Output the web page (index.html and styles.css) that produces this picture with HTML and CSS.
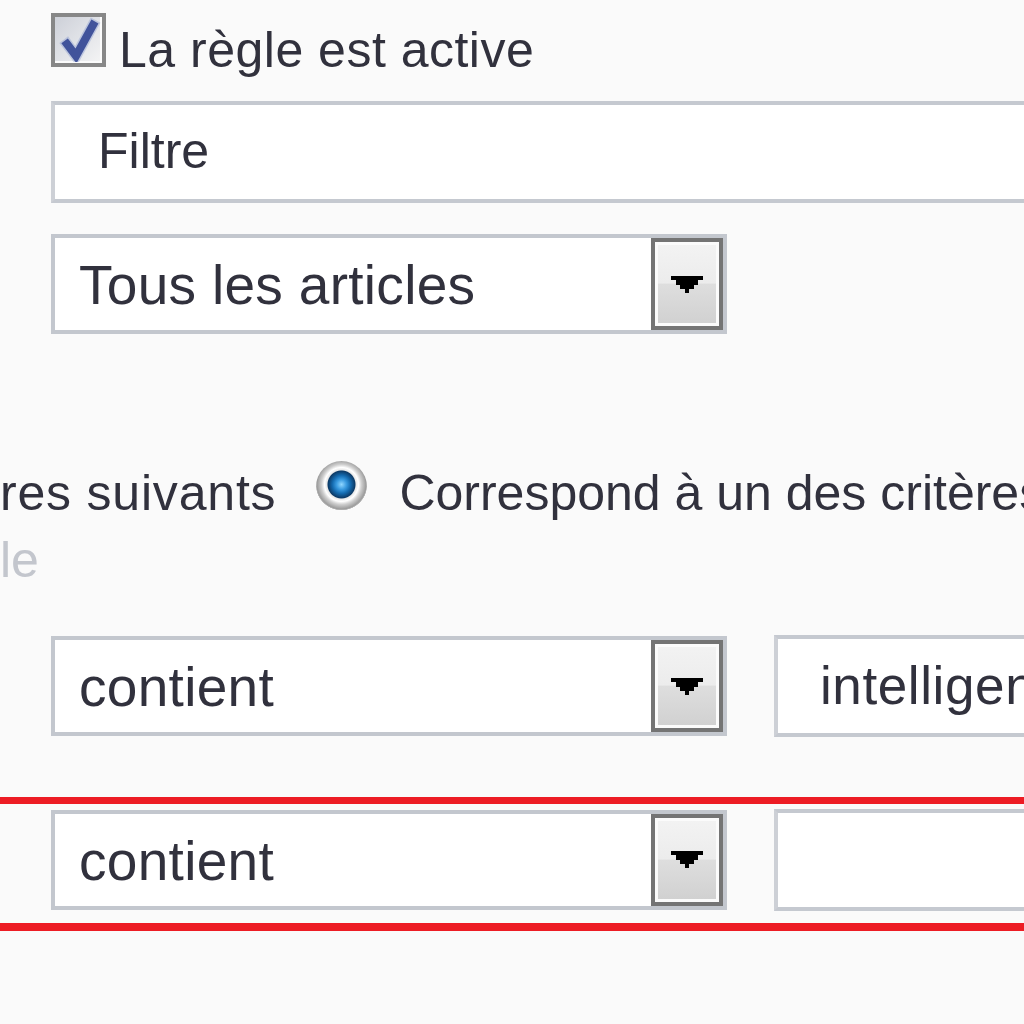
FILE: index.html
```html
<!DOCTYPE html>
<html lang="fr">
<head>
<meta charset="utf-8">
<title>Règle de filtre</title>
<link rel="stylesheet" href="styles.css">
</head>
<body>
<form class="rule-form">
  <label class="check-row">
    <span class="checkbox"><svg viewBox="0 0 46 45" width="46" height="45"><polyline points="12,27 21,39 38,8" fill="none" stroke="#8fa0d0" stroke-width="11" stroke-linejoin="miter" stroke-linecap="square" opacity="0.45"/><polyline points="12,27 21,39 38,8" fill="none" stroke="#41539b" stroke-width="8" stroke-linejoin="miter" stroke-linecap="square"/></svg></span><span class="check-label">La règle est active</span>
  </label>

  <div class="field-row">
    <div class="text-input wide">Filtre</div>
  </div>

  <div class="field-row">
    <div class="select"><span class="select-value">Tous les articles</span><span class="select-btn"><svg class="arrow" viewBox="0 0 7 4" preserveAspectRatio="none"><polygon points="0,0 7,0 7,1 6,1 6,2 5,2 5,3 4,3 4,4 3,4 3,3 2,3 2,2 1,2 1,1 0,1" fill="#000"/></svg></span></div>
  </div>

  <div class="match-row"><span class="match-tail">res suivants</span><span class="radio"></span><span class="match-any">Correspond à un des critères suivants</span></div>
  <div class="hint">le</div>

  <div class="cond-row">
    <div class="select"><span class="select-value">contient</span><span class="select-btn"><svg class="arrow" viewBox="0 0 7 4" preserveAspectRatio="none"><polygon points="0,0 7,0 7,1 6,1 6,2 5,2 5,3 4,3 4,4 3,4 3,3 2,3 2,2 1,2 1,1 0,1" fill="#000"/></svg></span></div>
    <div class="text-input cond-input">intelligence</div>
  </div>

  <div class="cond-row flagged">
    <div class="select"><span class="select-value">contient</span><span class="select-btn"><svg class="arrow" viewBox="0 0 7 4" preserveAspectRatio="none"><polygon points="0,0 7,0 7,1 6,1 6,2 5,2 5,3 4,3 4,4 3,4 3,3 2,3 2,2 1,2 1,1 0,1" fill="#000"/></svg></span></div>
    <div class="text-input cond-input"></div>
  </div>
</form>
</body>
</html>
```

FILE: styles.css
```css
html, body {
  margin: 0;
  padding: 0;
}

body {
  width: 1024px;
  height: 1024px;
  overflow: hidden;
  background: #fafafa;
  font-family: "Liberation Sans", Arial, sans-serif;
  font-size: 50px;
  color: #31313d;
}

.rule-form {
  padding-top: 13px;
  white-space: nowrap;
}

/* checkbox row */
.check-row {
  display: block;
  padding-left: 51px;
  font-size: 50px;
  line-height: 54px;
}

.check-label {
  letter-spacing: 0.5px;
}

.checkbox {
  display: inline-block;
  box-sizing: border-box;
  width: 55px;
  height: 54px;
  border: 4.5px solid #878787;
  background: linear-gradient(135deg, #cdd0d8 0%, #dfe1e6 45%, #f5f5f5 100%);
  box-shadow: inset -2px -2px 0 #fbfbfb;
  margin-right: 13px;
}

.checkbox svg {
  display: block;
}

.field-row {
  padding-left: 51px;
}

.check-row + .field-row {
  margin-top: 24px;
}

.field-row + .field-row {
  margin-top: 31px;
}

/* text input */
.text-input {
  box-sizing: border-box;
  height: 102px;
  border: 4.5px solid #c5c9d0;
  border-left-color: #cdd0d6;
  background: #fff;
  padding-left: 43px;
  font-size: 50px;
  line-height: 93px;
  color: #31313d;
  overflow: hidden;
}

.text-input.wide {
  width: 1100px;
}

/* select */
.select {
  box-sizing: border-box;
  display: flex;
  width: 676px;
  height: 100px;
  flex: none;
  border: 4.5px solid #c3c7ce;
  background: #fff;
}

.select-value {
  flex: 1;
  padding-left: 24px;
  padding-top: 3px;
  font-size: 55px;
  line-height: 88px;
  letter-spacing: 0.3px;
  color: #31313d;
}

.select-btn {
  box-sizing: border-box;
  width: 72px;
  display: flex;
  align-items: center;
  justify-content: center;
  border: 4.5px solid #747474;
  box-shadow: inset 0 0 0 3px #fbfbfb;
  background: linear-gradient(#f3f3f3 0%, #ececec 49%, #dedede 50%, #d0d0d0 100%);
}

.arrow {
  display: block;
  width: 31.5px;
  height: 17px;
  shape-rendering: crispEdges;
}

/* match mode row */
.match-row {
  margin-top: 127px;
  font-size: 50px;
  line-height: 60px;
}

.match-tail {
  letter-spacing: 0.8px;
}

.radio {
  display: inline-block;
  width: 51px;
  height: 51px;
  vertical-align: -2px;
  margin-left: 40px;
  margin-right: 32px;
  border-radius: 50%;
  background: radial-gradient(circle at 50% 46%, #8fd6ff 0, #3a9be0 5px, #146bb0 9px, #0c3a66 13.5px, #e8e8e8 14.5px, #ffffff 17px, #cfcfcf 20px, #9c9c9c 24.5px, #b8b8b8 25.5px, transparent 26px);
}

.hint {
  margin-top: 7px;
  font-size: 50px;
  line-height: 60px;
  color: #c3c6cd;
}

/* condition rows */
.cond-row {
  display: flex;
  align-items: center;
  gap: 47px;
  padding-left: 51px;
  margin-top: 45px;
}

.cond-input {
  width: 400px;
  flex: none;
  font-size: 53px;
  letter-spacing: 0.6px;
  padding-left: 42px;
}

.cond-row.flagged {
  margin-top: 59.5px;
  border-top: 7px solid #ed1c24;
  border-bottom: 8px solid #ed1c24;
  padding-top: 5px;
  padding-bottom: 12px;
}
```
